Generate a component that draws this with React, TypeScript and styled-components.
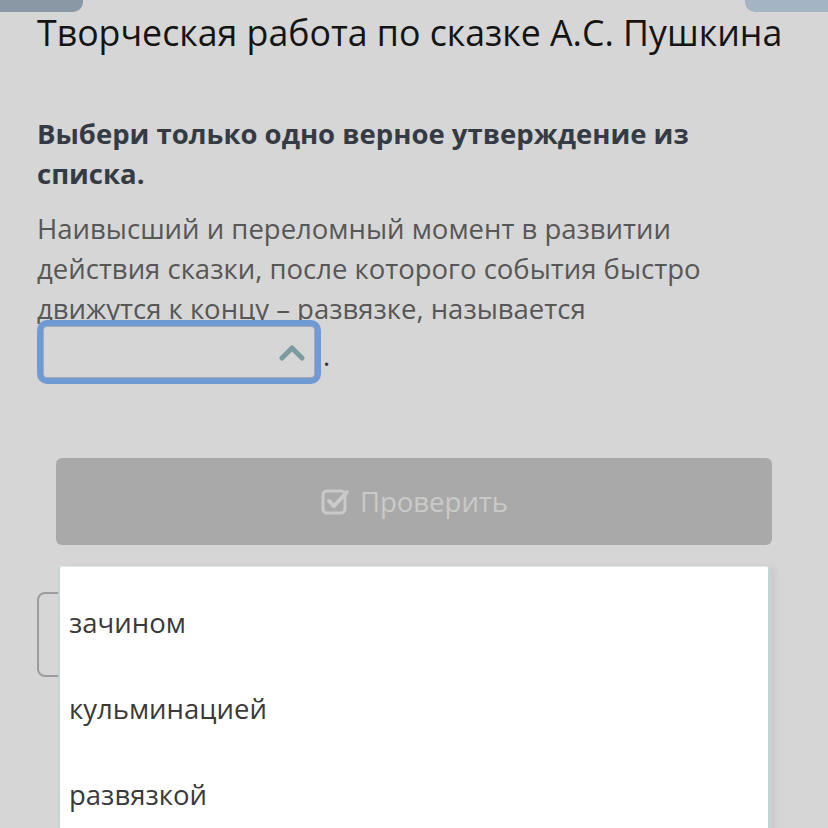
import React from 'react'
import styled, { createGlobalStyle } from 'styled-components'

const GlobalStyle = createGlobalStyle`
  html, body {
    margin: 0;
    padding: 0;
    background: #d6d6d6;
  }
  body {
    font-family: 'Open Sans', 'Noto Sans', sans-serif;
    overflow: hidden;
  }
`

const Page = styled.div`
  position: relative;
  width: 828px;
  height: 828px;
  overflow: hidden;
  background: #d6d6d6;
`

const TopBar = styled.div`
  display: flex;
  justify-content: space-between;
  height: 12px;
`

const Tab = styled.div<{ $side: 'left' | 'right' }>`
  width: 83px;
  height: 12px;
  background: ${(p) => (p.$side === 'left' ? '#8a97a5' : '#a4b4c4')};
  border-radius: ${(p) => (p.$side === 'left' ? '0 0 10px 0' : '0 0 0 10px')};
`

const Content = styled.div`
  width: 720px;
  padding: 0 37px;
`

const Title = styled.h1`
  margin: -2px 0 0;
  font-size: 35.7px;
  font-weight: 400;
  line-height: 44px;
  color: #141414;
  white-space: nowrap;
`

const Question = styled.p`
  margin: 60px 0 0;
  font-size: 27.5px;
  font-weight: 700;
  line-height: 40px;
  color: #353b44;
`

const Statement = styled.p`
  margin: 15px 0 0;
  font-size: 27.5px;
  line-height: 40px;
  color: #575757;
`

const SelectWrap = styled.span`
  display: inline-flex;
  vertical-align: top;
  margin-top: -9px;
  width: 284px;
  height: 64px;
  box-sizing: border-box;
  padding: 6px;
  border-radius: 10px;
  background: #6f9ad4;
`

const SelectBox = styled.span`
  display: flex;
  align-items: center;
  justify-content: flex-end;
  flex: 1;
  padding-right: 9px;
  border-radius: 4px;
  background: #d6d6d6;
  border: 1px solid #a4acb4;
`

const Dot = styled.span`
  margin-left: 2px;
  vertical-align: -7px;
  color: #333;
`

const ButtonArea = styled.div`
  padding: 74px 56px 0;
`

const CheckButton = styled.div`
  display: flex;
  align-items: center;
  justify-content: center;
  gap: 10px;
  height: 87px;
  border-radius: 6px;
  background: #a9a9a9;
  color: #cacaca;
  font-size: 27.5px;
`

const GhostButton = styled.div`
  margin: 47px 0 0 37px;
  width: 700px;
  height: 85px;
  box-sizing: border-box;
  border: 2px solid #9c9c9c;
  border-radius: 8px;
`

const Menu = styled.ul`
  position: absolute;
  left: 58px;
  top: 566px;
  width: 713px;
  height: 300px;
  margin: 0;
  padding: 0;
  list-style: none;
  box-sizing: border-box;
  background: #fff;
  border-left: 2px solid #c4d4d4;
  border-right: 3px solid #c4d4d4;
  border-top: 1px solid #dfe6e6;
  border-radius: 4px 4px 0 0;
  box-shadow: 5px 0 6px rgba(0, 0, 0, 0.05);
`

const Option = styled.li`
  height: 86px;
  padding: 0 0 0 9px;
  display: flex;
  align-items: center;
  font-size: 27.5px;
  color: #3a3a3a;
  &:first-child {
    margin-top: 12px;
  }
`

const ChevronUp = () => (
  <svg width="26" height="18" viewBox="0 0 26 18">
    <path d="M3 15 L13 5 L23 15" fill="none" stroke="#7c9b9e" strokeWidth="5" strokeLinecap="round" strokeLinejoin="round" />
  </svg>
)

const CheckSquare = () => (
  <svg width="30" height="30" viewBox="0 0 30 30">
    <rect x="3" y="4" width="22" height="22" rx="4" fill="none" stroke="#cacaca" strokeWidth="3" />
    <path d="M9 14 L14 19 L27 5" fill="none" stroke="#cacaca" strokeWidth="4" strokeLinecap="round" strokeLinejoin="round" />
  </svg>
)

const App = () => {
  return (
    <Page>
      <GlobalStyle />
      <TopBar>
        <Tab $side="left" />
        <Tab $side="right" />
      </TopBar>
      <Content>
        <Title>Творческая работа по сказке А.С. Пушкина</Title>
        <Question>Выбери только одно верное утверждение из списка.</Question>
        <Statement>
          Наивысший и переломный момент в развитии действия сказки, после которого события быстро
          движутся к концу – развязке, называется{' '}
          <SelectWrap>
            <SelectBox>
              <ChevronUp />
            </SelectBox>
          </SelectWrap>
          <Dot>.</Dot>
        </Statement>
      </Content>
      <ButtonArea>
        <CheckButton>
          <CheckSquare />
          Проверить
        </CheckButton>
      </ButtonArea>
      <GhostButton />
      <Menu>
        <Option>зачином</Option>
        <Option>кульминацией</Option>
        <Option>развязкой</Option>
      </Menu>
    </Page>
  )
}

export default App
